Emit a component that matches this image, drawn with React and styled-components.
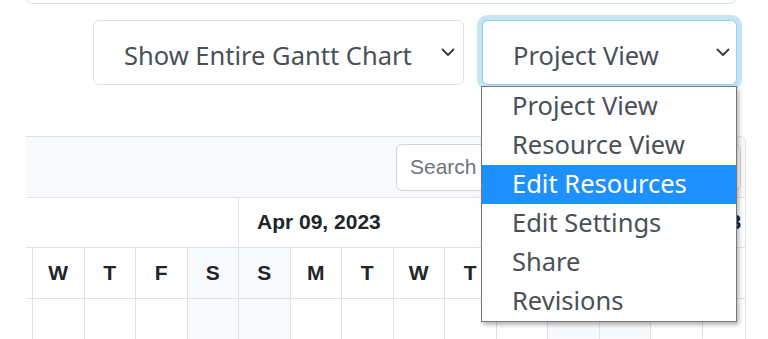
import React from 'react';
import styled, { createGlobalStyle } from 'styled-components';

const GlobalStyle = createGlobalStyle`
  html, body {
    margin: 0;
    padding: 0;
    background: #fff;
  }
  body {
    overflow: hidden;
    font-family: "Liberation Sans", Arial, sans-serif;
  }
`;

const Page = styled.div`
  width: 768px;
  height: 339px;
  overflow: hidden;
  padding-left: 26px;
  box-sizing: border-box;
`;

// bottom edge of the card above, mostly scrolled out of view
const TopCard = styled.div`
  width: 710px;
  height: 12px;
  margin-top: -8px;
  box-sizing: border-box;
  border: 1px solid #dee2e6;
  border-top: none;
  border-radius: 0 0 6px 6px;
`;

const Controls = styled.div`
  display: flex;
  justify-content: flex-end;
  gap: 18px;
  width: 711px;
  margin-top: 16px;
`;

const SelectWrap = styled.div`
  position: relative;
  width: ${(p) => p.$width}px;
`;

const SelectBox = styled.div`
  display: flex;
  align-items: center;
  height: 65px;
  box-sizing: border-box;
  padding: 5px 0 0 30px;
  border: 1px solid ${(p) => (p.$focused ? '#92d1ea' : '#dee2e6')};
  border-radius: 6px;
  background: #fff;
  box-shadow: ${(p) => (p.$focused ? '0 0 0 5px #c4e6f4' : 'none')};
  font-family: "Noto Sans", "Segoe UI", sans-serif;
  font-size: 25.5px;
  color: #495057;
  white-space: nowrap;
`;

const Chevron = styled.svg`
  flex: none;
  margin: -5px ${(p) => p.$gap}px 0 auto;
`;

const OptionList = styled.div`
  position: absolute;
  top: calc(100% + 1px);
  left: -1px;
  width: 256px;
  box-sizing: border-box;
  border: 1px solid #787878;
  background: #fff;
  box-shadow: 2px 3px 4px rgba(0, 0, 0, 0.28);
  z-index: 10;
`;

const Option = styled.div`
  height: 39px;
  line-height: 37px;
  padding-left: 30px;
  font-family: "Noto Sans", "Segoe UI", sans-serif;
  font-size: 25.5px;
  white-space: nowrap;
  color: ${(p) => (p.$active ? '#fff' : '#495057')};
  background: ${(p) => (p.$active ? '#1e90ff' : '#fff')};
`;

const TableCard = styled.div`
  width: 720px;
  margin-top: 51px;
  box-sizing: border-box;
  border: 1px solid #dee2e6;
  border-left: none;
  border-radius: 0 6px 0 0;
  overflow: hidden;
`;

const Toolbar = styled.div`
  display: flex;
  justify-content: flex-end;
  align-items: center;
  height: 60px;
  padding-right: 4px;
  background: #f8f9fa;
`;

const SearchInput = styled.input`
  width: 345px;
  height: 47px;
  box-sizing: border-box;
  padding: 0 0 0 13px;
  border: 1px solid #ced4da;
  border-radius: 6px;
  background: #fff;
  font-family: "Liberation Sans", Arial, sans-serif;
  font-size: 21px;
  color: #495057;
  outline: none;

  &::placeholder {
    color: #6c757d;
  }
`;

const Row = styled.div`
  display: grid;
  grid-template-columns: 6px repeat(13, 51.5px) 1fr;
  height: ${(p) => p.$height}px;
  border-top: 1px solid #dee2e6;
`;

const Cell = styled.div`
  grid-column: span ${(p) => p.$span || 1};
  border-left: ${(p) => (p.$first ? 'none' : '1px solid #dee2e6')};
  background: ${(p) => (p.$weekend ? '#f8f9fa' : '#fff')};
  overflow: hidden;
`;

const WeekCell = styled(Cell)`
  padding: 12px 18px 0;
  font-size: 21px;
  font-weight: 700;
  color: #212529;
  white-space: nowrap;
`;

const DayCell = styled(Cell)`
  display: flex;
  align-items: center;
  justify-content: center;
  font-size: 21px;
  font-weight: 700;
  color: #212529;
`;

const days = ['T', 'W', 'T', 'F', 'S', 'S', 'M', 'T', 'W', 'T', 'F', 'S', 'S', 'M', 'T'];
const weekend = [4, 5, 11, 12];

const weeks = [
  { label: '', span: 5 },
  { label: 'Apr 09, 2023', span: 7 },
  { label: 'Apr 16, 2023', span: 3 },
];

const options = ['Project View', 'Resource View', 'Edit Resources', 'Edit Settings', 'Share', 'Revisions'];

const ChevronIcon = ({ gap }) => (
  <Chevron $gap={gap} width="14" height="9" viewBox="0 0 14 9">
    <path d="M1.5 1.5l5.5 5.5 5.5-5.5" fill="none" stroke="#343a40" strokeWidth="1.8" strokeLinecap="round" strokeLinejoin="round" />
  </Chevron>
);

const App = () => {
  return (
    <>
      <GlobalStyle />
      <Page>
        <TopCard />
        <Controls>
          <SelectWrap $width={371}>
            <SelectBox>
              Show Entire Gantt Chart
              <ChevronIcon gap={8} />
            </SelectBox>
          </SelectWrap>
          <SelectWrap $width={255}>
            <SelectBox $focused>
              Project View
              <ChevronIcon gap={6} />
            </SelectBox>
            <OptionList>
              {options.map((o) => (
                <Option key={o} $active={o === 'Edit Resources'}>{o}</Option>
              ))}
            </OptionList>
          </SelectWrap>
        </Controls>

        <TableCard>
          <Toolbar>
            <SearchInput placeholder="Search" />
          </Toolbar>
          <Row $height={49}>
            {weeks.map((w, i) => (
              <WeekCell key={i} $span={w.span} $first={i === 0}>{w.label}</WeekCell>
            ))}
          </Row>
          <Row $height={50}>
            {days.map((d, i) => (
              <DayCell key={i} $first={i === 0} $weekend={weekend.includes(i)}>
                {i === 0 ? '' : d}
              </DayCell>
            ))}
          </Row>
          <Row $height={60}>
            {days.map((d, i) => (
              <Cell key={i} $first={i === 0} $weekend={weekend.includes(i)} />
            ))}
          </Row>
        </TableCard>
      </Page>
    </>
  );
};

export default App;
